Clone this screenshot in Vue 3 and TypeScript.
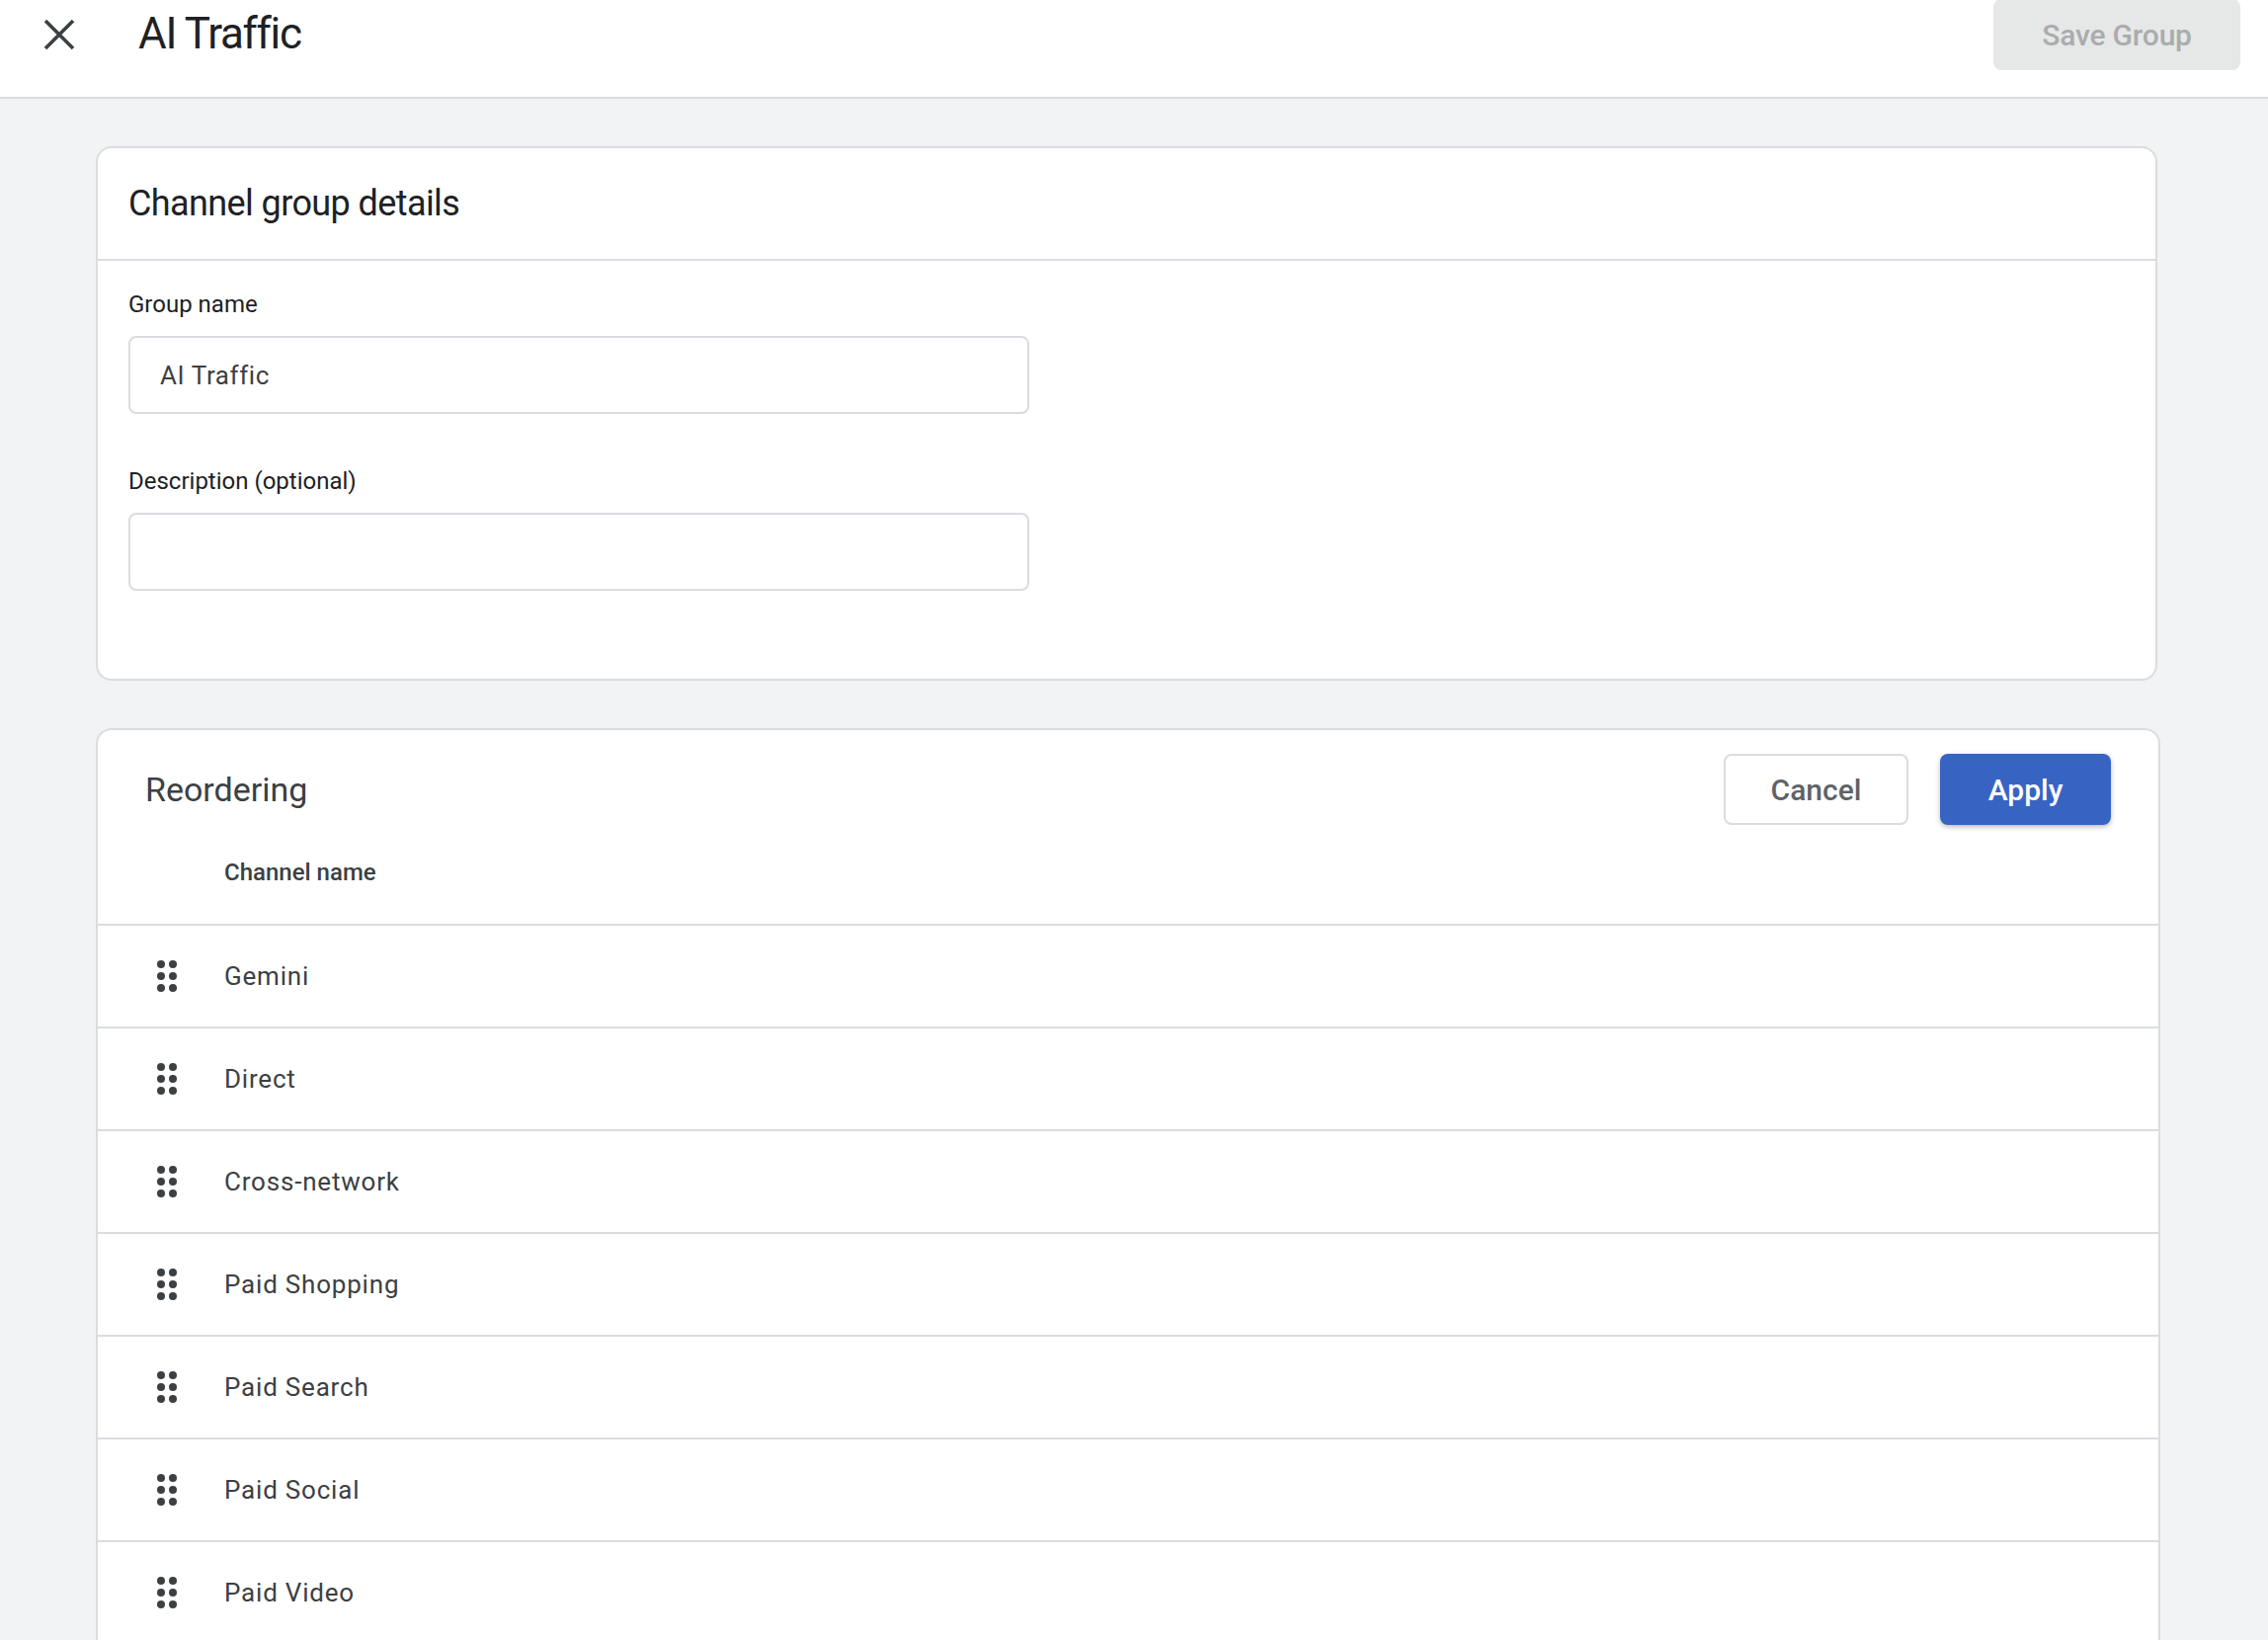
<script setup lang="ts">
const channels: string[] = ['Gemini', 'Direct', 'Cross-network', 'Paid Shopping', 'Paid Search', 'Paid Social', 'Paid Video']
const dots: [number, number][] = [[8, 8], [20, 8], [8, 20], [20, 20], [8, 32], [20, 32]]
</script>

<template>
  <div class="page">
    <header class="topbar">
      <button class="close" aria-label="Close">
        <svg width="34" height="34" viewBox="0 0 34 34">
          <path d="M3 3 L31 31 M31 3 L3 31" stroke="#3c4043" stroke-width="3.6" fill="none" />
        </svg>
      </button>
      <h1 class="title">AI Traffic</h1>
      <button class="save">Save Group</button>
    </header>

    <main class="content">
      <section class="card details">
        <h2 class="card-title">Channel group details</h2>
        <div class="form">
          <label class="label" for="group-name">Group name</label>
          <input id="group-name" class="field" value="AI Traffic" />
          <label class="label second" for="group-desc">Description (optional)</label>
          <input id="group-desc" class="field" value="" />
        </div>
      </section>

      <section class="card reorder">
        <div class="reorder-head">
          <h2 class="reorder-title">Reordering</h2>
          <div class="actions">
            <button class="cancel">Cancel</button>
            <button class="apply">Apply</button>
          </div>
        </div>
        <div class="column-head">Channel name</div>
        <div v-for="name in channels" :key="name" class="row">
          <svg class="grip" width="28" height="40" viewBox="0 0 28 40">
            <circle v-for="(d, i) in dots" :key="i" :cx="d[0]" :cy="d[1]" r="4" fill="#3c4043" />
          </svg>
          <span class="row-name">{{ name }}</span>
        </div>
      </section>
    </main>
  </div>
</template>

<style>
html, body {
  margin: 0;
  height: 100%;
  overflow: hidden;
  background: #f1f3f4;
}
</style>

<style scoped>
.page {
  height: 1660px;
  overflow: hidden;
  background: #f1f3f4;
  font-family: Roboto, "Liberation Sans", sans-serif;
}
.topbar {
  box-sizing: border-box;
  height: 100px;
  display: flex;
  align-items: flex-start;
  background: #fff;
  border-bottom: 2px solid #dadce0;
  padding-left: 43px;
  padding-right: 28px;
}
.close {
  border: 0;
  background: none;
  padding: 0;
  margin-top: 18px;
  width: 34px;
  height: 34px;
  display: flex;
}
.title {
  margin: 8px 0 0 63px;
  font-size: 44px;
  line-height: 52px;
  font-weight: 400;
  letter-spacing: -1.3px;
  color: #202124;
  flex: 1;
}
.save {
  width: 250px;
  height: 72px;
  margin-top: -1px;
  border: 0;
  border-radius: 8px;
  background: #e6e8e8;
  color: #aaacae;
  font-family: inherit;
  font-size: 30px;
  font-weight: 500;
  letter-spacing: -0.2px;
}
.content {
  padding: 48px 109px 0 97px;
  display: flex;
  flex-direction: column;
  align-items: flex-start;
  gap: 48px;
}
.card {
  box-sizing: border-box;
  background: #fff;
  border: 2px solid #dadce0;
  border-radius: 16px;
}
.details {
  width: 2087px;
  height: 541px;
}
.card-title {
  box-sizing: border-box;
  height: 114px;
  margin: 0;
  padding: 0 31px;
  display: flex;
  align-items: center;
  border-bottom: 2px solid #dadce0;
  font-size: 36px;
  font-weight: 400;
  letter-spacing: -0.6px;
  color: #202124;
}
.form {
  padding: 28px 31px 0;
  display: flex;
  flex-direction: column;
  align-items: flex-start;
}
.label {
  font-size: 24px;
  line-height: 32px;
  color: #202124;
  margin-bottom: 16px;
}
.label.second {
  margin-top: 52px;
}
.field {
  box-sizing: border-box;
  width: 912px;
  height: 79px;
  padding: 0 30px;
  border: 2px solid #dadce0;
  border-radius: 8px;
  background: #fff;
  outline: none;
  font-family: inherit;
  font-size: 26px;
  letter-spacing: 0.6px;
  color: #3c4043;
}
.reorder {
  width: 2090px;
  height: 1200px;
  flex: none;
}
.reorder-head {
  display: flex;
  align-items: flex-start;
  justify-content: space-between;
  padding: 24px 48px 0 48px;
}
.reorder-title {
  margin: 0;
  font-size: 34px;
  line-height: 72px;
  font-weight: 400;
  color: #3c4043;
}
.actions {
  display: flex;
  gap: 32px;
}
.cancel, .apply {
  box-sizing: border-box;
  height: 72px;
  border-radius: 8px;
  font-family: inherit;
  font-size: 30px;
  font-weight: 500;
}
.cancel {
  width: 187px;
  background: #fff;
  border: 2px solid #dadce0;
  color: #5f6368;
}
.apply {
  width: 173px;
  background: #3764c3;
  border: 0;
  color: #fff;
  box-shadow: 0 2px 5px rgba(60, 64, 67, 0.35);
}
.column-head {
  box-sizing: border-box;
  height: 102px;
  padding: 32px 0 0 128px;
  font-size: 24px;
  line-height: 32px;
  font-weight: 500;
  color: #3c4043;
  border-bottom: 2px solid #dadce0;
}
.row {
  box-sizing: border-box;
  height: 104px;
  padding: 0 0 0 56px;
  display: flex;
  align-items: center;
  border-bottom: 2px solid #dadce0;
}
.grip {
  flex: none;
}
.row-name {
  margin-left: 44px;
  font-size: 26px;
  letter-spacing: 0.8px;
  color: #3c4043;
}
</style>
